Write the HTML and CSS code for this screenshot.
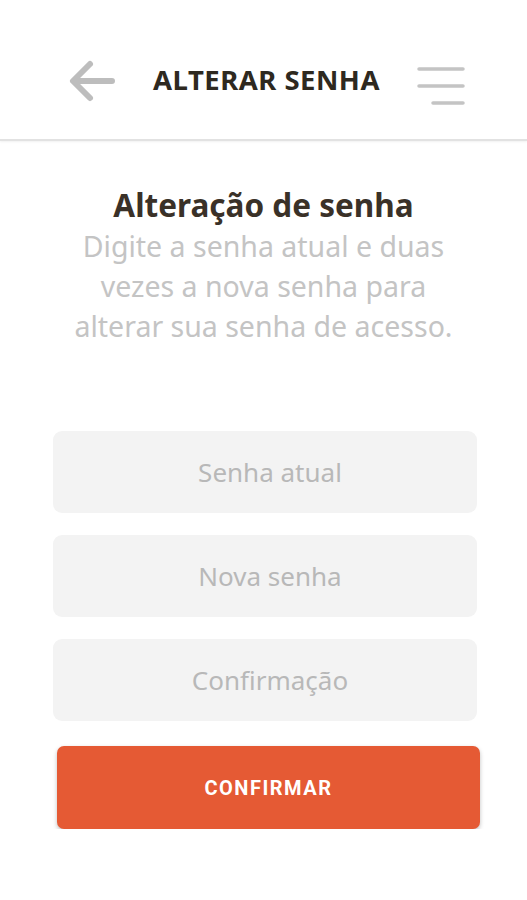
FILE: index.html
```html
<!DOCTYPE html>
<html lang="pt-BR">
<head>
  <meta charset="UTF-8">
  <title>Alterar senha</title>
  <link rel="stylesheet" href="styles.css">
</head>
<body>
  <header class="topbar">
    <button class="icon-btn back" aria-label="Voltar">
      <svg width="48" height="44" viewBox="0 0 48 44">
        <path d="M44 22H6M22 5L5 22l17 17" fill="none" stroke="#bdbdbd" stroke-width="6" stroke-linecap="round" stroke-linejoin="round"/>
      </svg>
    </button>
    <h1 class="title">ALTERAR SENHA</h1>
    <button class="icon-btn menu" aria-label="Menu">
      <svg width="48" height="38" viewBox="0 0 48 38">
        <path d="M2 2H46M2 19H46M16 36H46" stroke="#c4c4c4" stroke-width="3.5" stroke-linecap="round"/>
      </svg>
    </button>
  </header>

  <main class="content">
    <h2 class="heading">Alteração de senha</h2>
    <p class="intro">Digite a senha atual e duas vezes a nova senha para alterar sua senha de acesso.</p>

    <form class="form">
      <input class="field" type="password" placeholder="Senha atual">
      <input class="field" type="password" placeholder="Nova senha">
      <input class="field" type="password" placeholder="Confirmação">
      <button type="button" class="confirm">CONFIRMAR</button>
    </form>
  </main>
</body>
</html>
```

FILE: styles.css
```css
body {
  margin: 0;
  background: #fff;
  font-family: "Noto Sans", "Open Sans", sans-serif;
}
.topbar {
  height: 141px;
  display: flex;
  align-items: center;
  justify-content: space-between;
  padding: 22px 62px 0 68px;
  border-bottom: 2px solid #e2e2e2;
  box-shadow: 0 1px 2px rgba(0,0,0,0.06);
  box-sizing: border-box;
}
.icon-btn {
  background: none;
  border: 0;
  padding: 0;
  display: flex;
}
.menu {
  margin-top: 10px;
}
.title {
  margin: 0 0 2px;
  font-size: 27.5px;
  font-weight: 700;
  color: #2e2920;
  letter-spacing: 0.5px;
}
.content {
  padding: 0 40px;
  text-align: center;
}
.heading {
  margin: 43px 0 0;
  font-size: 31.5px;
  font-weight: 700;
  color: #3a3128;
  line-height: 42px;
}
.intro {
  margin: 0 auto;
  font-size: 28.5px;
  line-height: 40px;
  color: #c4c4c4;
  max-width: 400px;
}
.form {
  margin-top: 85px;
  display: flex;
  flex-direction: column;
  gap: 22px;
  padding: 0 10px 0 13px;
}
.field {
  height: 82px;
  border: 0;
  border-radius: 9px;
  background: #f3f3f3;
  padding-left: 12px;
  font-family: inherit;
  font-size: 26px;
  text-align: center;
  color: #555;
  box-sizing: border-box;
}
.field::placeholder {
  color: #b8b8b8;
}
.confirm {
  margin: 3px -3px 0 4px;
  height: 83px;
  border: 0;
  border-radius: 7px;
  background: #e55a34;
  color: #fff;
  font-family: Roboto, sans-serif;
  font-weight: 700;
  font-size: 20px;
  letter-spacing: 1.5px;
  box-shadow: 0 2px 4px rgba(0,0,0,0.25);
}
```
